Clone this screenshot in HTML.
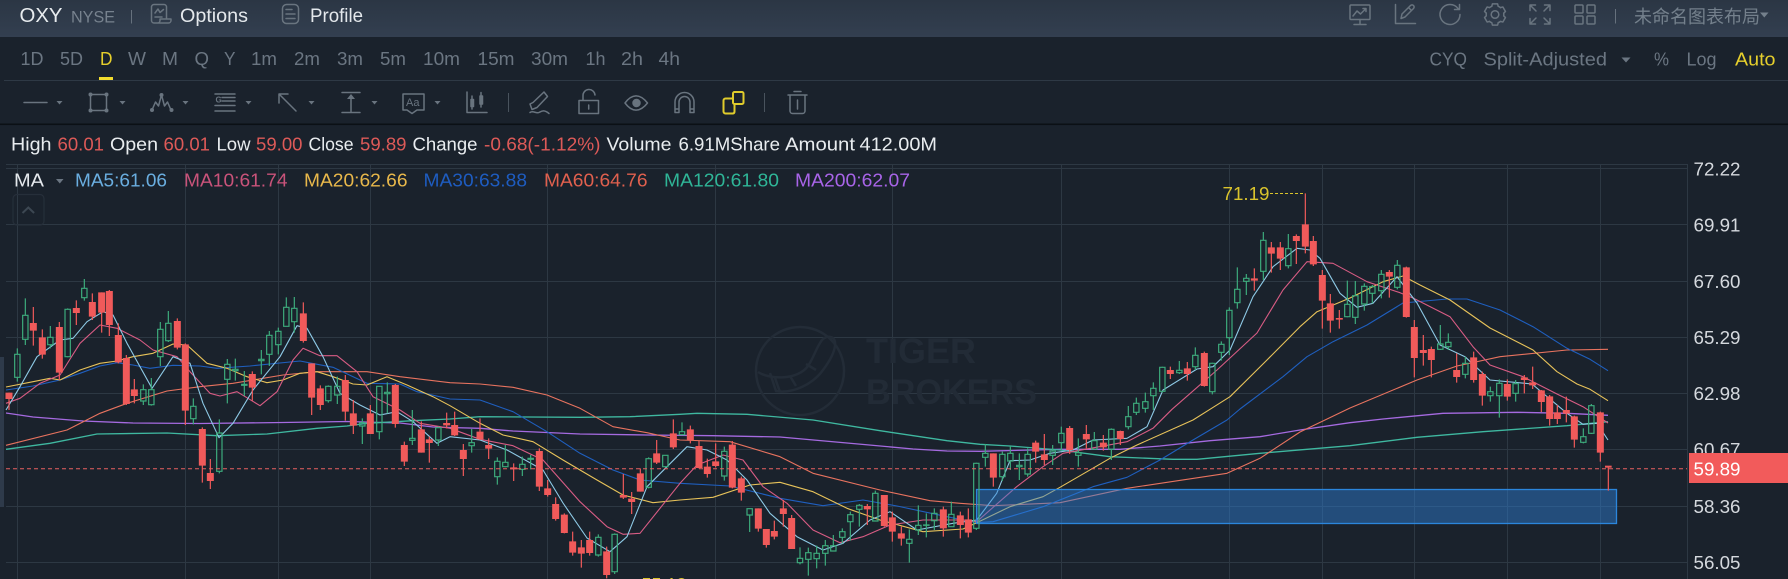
<!DOCTYPE html>
<html><head><meta charset="utf-8"><title>OXY</title>
<style>
html,body{margin:0;padding:0;background:#1a222c;width:1788px;height:579px;overflow:hidden}
svg{display:block}
text{font-family:"Liberation Sans","Noto Sans CJK SC",sans-serif}
.ic{fill:none;stroke:#69747f;stroke-width:1.5;stroke-linecap:round;stroke-linejoin:round}
.it{fill:none;stroke:#5d6874;stroke-width:1.5;stroke-linecap:round;stroke-linejoin:round}
.c path{vector-effect:non-scaling-stroke;fill:none}
.rw{stroke:#f05a5a;stroke-width:1.2}
.rb{stroke:#f05a5a;stroke-width:7}
.gn{stroke:#3dab7c;stroke-width:1.2}
.ma{fill:none;stroke-width:1.1;stroke-linejoin:round}
</style></head><body>
<svg width="1788" height="579" viewBox="0 0 1788 579" xmlns="http://www.w3.org/2000/svg">
<defs><linearGradient id="hd" x1="0" y1="0" x2="0" y2="1"><stop offset="0" stop-color="#2b3644"/><stop offset="1" stop-color="#333f50"/></linearGradient></defs>
<rect width="1788" height="579" fill="#1a222c"/>
<rect width="1788" height="37" fill="url(#hd)"/>
<rect y="80" x="4" width="1784" height="1" fill="#2e3945"/>
<rect y="123.5" width="1788" height="1.6" fill="#0b1015"/>

<!-- Header -->
<text x="19.5" y="22" font-size="20.5" fill="#e8ecef" textLength="43" lengthAdjust="spacingAndGlyphs">OXY</text>
<text x="71" y="22.5" font-size="17" fill="#77828e" textLength="44" lengthAdjust="spacingAndGlyphs">NYSE</text>
<rect x="131" y="10" width="1" height="13.5" fill="#66717d"/>
<g class="ic"><path d="M166.5 19V7a2.5 2.5 0 0 0-2.5-2.5H154a2.5 2.5 0 0 0-2.5 2.5v13.5a2.5 2.5 0 0 0 2.5 2.5h14.5a2.5 2.5 0 0 0 2.5-2.5V19H160v1.5a2.5 2.5 0 0 1-2.5 2.5"/><path d="M155 13l3-4 2 3.5 3.5-3"/><path d="M155 17h7"/></g>
<text x="180" y="22" font-size="19" fill="#e4e8ec" textLength="68" lengthAdjust="spacingAndGlyphs">Options</text>
<g class="ic"><rect x="282.5" y="4.5" width="16" height="19" rx="4"/><path d="M286 9.5h6M286 14h9M286 18.5h9"/></g>
<text x="310" y="22" font-size="19" fill="#e4e8ec" textLength="53" lengthAdjust="spacingAndGlyphs">Profile</text>

<g class="ic">
<rect x="1350" y="5" width="20" height="14.5" rx="1"/><path d="M1360 19.5V24M1354 24.5h12M1353 16l4-5 3.5 3 5-5M1363 8.5h3v3"/>
<path d="M1395.5 4.5V23.5H1415.5M1401 18.5l1-4.5 8.5-8.5a1.8 1.8 0 0 1 3 3l-8.5 8.5zM1408.5 7.5l3 3"/>
<path d="M1458 8.5A10 10 0 1 0 1460 14.5M1459.5 4.5v5h-5" />
<g transform="translate(1495 14.5)"><circle r="3.8"/>
<path id="gs" d="M-3.2-8.2L-2.6-10.6H2.6L3.2-8.2A9 9 0 0 1 5.5-6.87"/>
<path transform="rotate(60)" d="M-3.2-8.2L-2.6-10.6H2.6L3.2-8.2A9 9 0 0 1 5.5-6.87"/>
<path transform="rotate(120)" d="M-3.2-8.2L-2.6-10.6H2.6L3.2-8.2A9 9 0 0 1 5.5-6.87"/>
<path transform="rotate(180)" d="M-3.2-8.2L-2.6-10.6H2.6L3.2-8.2A9 9 0 0 1 5.5-6.87"/>
<path transform="rotate(240)" d="M-3.2-8.2L-2.6-10.6H2.6L3.2-8.2A9 9 0 0 1 5.5-6.87"/>
<path transform="rotate(300)" d="M-3.2-8.2L-2.6-10.6H2.6L3.2-8.2A9 9 0 0 1 5.5-6.87"/></g>
<path d="M1530 5h5.5M1530 5v5.5M1530 5l6 6M1550 5h-5.5M1550 5v5.5M1550 5l-6 6M1530 24v-5.5M1530 24h5.5M1530 24l6-6M1550 24v-5.5M1550 24h-5.5M1550 24l-6-6"/>
<rect x="1575" y="5" width="8" height="8" rx="1"/><rect x="1587" y="5" width="8" height="8" rx="1"/><rect x="1575" y="16" width="8" height="8" rx="1"/><rect x="1587" y="16" width="8" height="8" rx="1"/>
</g>
<rect x="1615" y="9" width="1" height="14.5" fill="#66717d"/>
<text x="1634" y="23" font-size="18" fill="#74808c" textLength="126">未命名图表布局</text>
<path d="M1760 12.5h8.5l-4.2 5z" fill="#74808c"/>

<!-- Timeframes -->
<g font-size="18" fill="#6b7682">
<text x="20.5" y="65" textLength="23" lengthAdjust="spacingAndGlyphs">1D</text>
<text x="60" y="65" textLength="23" lengthAdjust="spacingAndGlyphs">5D</text>
<text x="100" y="65" textLength="12.5" lengthAdjust="spacingAndGlyphs" fill="#e6cf2c">D</text>
<text x="128" y="65" textLength="18" lengthAdjust="spacingAndGlyphs">W</text>
<text x="162" y="65" textLength="16" lengthAdjust="spacingAndGlyphs">M</text>
<text x="194.5" y="65" textLength="14.5" lengthAdjust="spacingAndGlyphs">Q</text>
<text x="224" y="65" textLength="11.5" lengthAdjust="spacingAndGlyphs">Y</text>
<text x="251" y="65" textLength="26" lengthAdjust="spacingAndGlyphs">1m</text>
<text x="294" y="65" textLength="26" lengthAdjust="spacingAndGlyphs">2m</text>
<text x="337" y="65" textLength="26" lengthAdjust="spacingAndGlyphs">3m</text>
<text x="380" y="65" textLength="26" lengthAdjust="spacingAndGlyphs">5m</text>
<text x="423" y="65" textLength="37" lengthAdjust="spacingAndGlyphs">10m</text>
<text x="477.5" y="65" textLength="37" lengthAdjust="spacingAndGlyphs">15m</text>
<text x="531" y="65" textLength="37" lengthAdjust="spacingAndGlyphs">30m</text>
<text x="585.5" y="65" textLength="20" lengthAdjust="spacingAndGlyphs">1h</text>
<text x="621" y="65" textLength="22" lengthAdjust="spacingAndGlyphs">2h</text>
<text x="658.5" y="65" textLength="21.5" lengthAdjust="spacingAndGlyphs">4h</text>
<text x="1429.5" y="65.5" textLength="37.5" lengthAdjust="spacingAndGlyphs">CYQ</text>
<text x="1483.5" y="65.5" textLength="123.5" lengthAdjust="spacingAndGlyphs">Split-Adjusted</text>
<text x="1654" y="65.5" textLength="15" lengthAdjust="spacingAndGlyphs">%</text>
<text x="1686.5" y="65.5" textLength="30" lengthAdjust="spacingAndGlyphs">Log</text>
<text x="1735" y="65.5" textLength="40.5" lengthAdjust="spacingAndGlyphs" fill="#e6cf2c">Auto</text>
</g>
<rect x="99" y="77" width="14" height="3" fill="#f2dc2e"/>
<path d="M1621.5 57.5h9l-4.5 5z" fill="#6b7682"/>

<!-- Toolbar -->
<g class="ic">
<path d="M24 102.5h23"/>
<path d="M90.5 94.5h16v16h-16z"/>
<path d="M152 110l3.5-8 3 4 3-11 3 11 3-4 3.5 8"/>
<path d="M215 94h20M222 97.5h13M222 101h13M215 105.5h20M215 111h20"/>
<path d="M279 94l17 17M279 94h9M279 94v9"/>
<path d="M342 92.5h18M342 112.5h18M351 96v16"/>
<path d="M403 94h21v16h-7l-5 3.5-5-3.5h-4z"/>
<path d="M467 92v20.5h20M472 99.5v7M472 96v3M472 106v3M481 96v8M481 92.5v3M481 104v3"/>
<path d="M471 99.5h2.5v7h-2.5zM480 96h2.5v8H480z" fill="#69747f"/>
<path d="M530 104l2 5.5 5-2 10.5-11-3.5-4.5-11 10.5zM530 112.5c3-2.5 6 1.5 9 0s5-3 10 1"/>
<path d="M579 100.5h19.5v13h-19.5zM583 100.5v-4.5a6 6 0 0 1 12-1M588.7 105v4"/>
<path d="M625 103c7-9.5 15-9.5 22.500 0-7.500 9.500-15.500 9.500-22.500 0z"/>
<circle cx="636.500" cy="103" r="3.500" fill="#69747f"/>
<path d="M675 112.500v-10.500a9.500 9.500 0 0 1 19 0v10.500h-4v-10.500a5.500 5.500 0 0 0-11 0v10.500zM675 109h4M690 109h4"/>
<path d="M788 95h19M794 91.500h7M790 95v16a2.500 2.500 0 0 0 2.500 2.500h10a2.500 2.500 0 0 0 2.500-2.500V95M797.500 100v9"/>
</g>
<g fill="#69747f">
<text x="406" y="106" font-size="11">Aa</text>
<text x="215.500" y="102.500" font-size="8" font-weight="bold">G</text>
<circle cx="90.500" cy="94.500" r="2"/><circle cx="106.500" cy="94.500" r="2"/><circle cx="90.500" cy="110.500" r="2"/><circle cx="106.500" cy="110.500" r="2"/>
<circle cx="152" cy="110" r="2"/><circle cx="171.500" cy="110" r="2"/><circle cx="161.500" cy="95" r="2"/>
<path d="M351 94l-4 5h8zM56.500 101h6l-3 3.500zM119.500 101h6l-3 3.500zM182.500 101h6l-3 3.500zM245.500 101h6l-3 3.500zM308.500 101h6l-3 3.500zM371.500 101h6l-3 3.500zM434.500 101h6l-3 3.500z"/>
<rect x="508" y="93" width="1" height="19" opacity=".6"/><rect x="764" y="93" width="1" height="19" opacity=".6"/>
</g>
<g fill="none" stroke="#e0cc2c" stroke-width="2" stroke-linejoin="round">
<rect x="733" y="92" width="10.500" height="12" rx="1.500"/><path d="M733 98.500h-7.500a2 2 0 0 0-2 2v11a2 2 0 0 0 2 2h7.500a2 2 0 0 0 1.500-2v-7.500"/>
</g>

<!-- Info -->
<g font-size="18" fill="#e8ecef">
<text x="11" y="150.500" textLength="40.500" lengthAdjust="spacingAndGlyphs">High</text>
<text x="57.500" y="150.500" textLength="46.500" lengthAdjust="spacingAndGlyphs" fill="#dd5a58">60.01</text>
<text x="110" y="150.500" textLength="48" lengthAdjust="spacingAndGlyphs">Open</text>
<text x="163.500" y="150.500" textLength="46.500" lengthAdjust="spacingAndGlyphs" fill="#dd5a58">60.01</text>
<text x="216.500" y="150.500" textLength="34" lengthAdjust="spacingAndGlyphs">Low</text>
<text x="256" y="150.500" textLength="46.500" lengthAdjust="spacingAndGlyphs" fill="#dd5a58">59.00</text>
<text x="308.500" y="150.500" textLength="45" lengthAdjust="spacingAndGlyphs">Close</text>
<text x="360" y="150.500" textLength="46.500" lengthAdjust="spacingAndGlyphs" fill="#dd5a58">59.89</text>
<text x="412.500" y="150.500" textLength="65" lengthAdjust="spacingAndGlyphs">Change</text>
<text x="484" y="150.500" textLength="116.500" lengthAdjust="spacingAndGlyphs" fill="#dd5a58">-0.68(-1.12%)</text>
<text x="606.500" y="150.500" textLength="65" lengthAdjust="spacingAndGlyphs">Volume</text>
<text x="678.500" y="150.500" textLength="101.500" lengthAdjust="spacingAndGlyphs">6.91MShare</text>
<text x="785" y="150.500" textLength="70" lengthAdjust="spacingAndGlyphs">Amount</text>
<text x="859.500" y="150.500" textLength="77.500" lengthAdjust="spacingAndGlyphs">412.00M</text>
</g>

<!-- Grid -->
<g stroke="#2d3843" stroke-width="1" fill="none">
<path d="M6 164.500H1687M6 168.500H1687M6 224.500H1687M6 281.500H1687M6 337.500H1687M6 393.500H1687M6 449.500H1687M6 506.500H1687M6 562.500H1687"/>
<path d="M17.500 164V579M185.500 164V579M278.500 164V579M370.500 164V579M547.500 164V579M715.500 164V579M892.500 164V579M1061.500 164V579M1229.500 164V579M1322.500 164V579M1414.500 164V579M1507.500 164V579M1600.500 164V579M1687.500 164V579"/>
</g>
<rect x="0" y="357" width="4" height="150" fill="#2e3a4a"/>

<!-- Watermark -->
<g fill="none" stroke="#232c37" stroke-width="2.500">
<circle cx="800" cy="371" r="44"/>
<path d="M758 372c12 8 40 8 50-6 6-9 8-18 14-26 5-5 12-4 13 2 1 9-6 20-12 28-10 14-30 24-47 21l-6-18"/>
<path d="M775 378l5 14M790 376l6 10M806 364l10 6" />
</g>
<g fill="#222b36" font-weight="bold">
<text x="866" y="363" font-size="35" textLength="110" lengthAdjust="spacingAndGlyphs">TIGER</text>
<text x="866" y="404" font-size="35" textLength="171" lengthAdjust="spacingAndGlyphs">BROKERS</text>
</g>

<!-- MA lines -->
<g class="ma">
<polyline stroke="#a56ae0" stroke-width="1.300" points="6,413 33,417 83,421 133,423 200,423.500 283,422.500 347,421.500 400,423 433,427 450,427.500 480,428.300 513,431 580,434 647,435 713,435.700 780,437 847,443 913,449 947,451 980,451.300 1060,449.300 1120,449.300 1160,446 1210,440.700 1260,436.700 1300,430 1350,422.700 1383,419 1443,413.300 1517,412.300 1567,413.300 1608,415.300"/>
<polyline stroke="#3fb8a0" stroke-width="1.300" points="6,449.300 50,443.300 97,434 167,433 217,435.700 267,434 317,428.300 347,426 367,423.300 413,420.700 450,419 480,416.700 580,417.300 630,416.700 680,414.300 697,413.300 747,414.300 813,420 880,430.700 947,440.700 980,444.300 1010,446 1060,450 1110,456.700 1173,459.300 1197,459.300 1260,453.300 1350,445.700 1417,437.300 1483,431.700 1567,425.700 1608,421.700"/>
<polyline stroke="#e8735f" points="6,445.300 67,430 100,413.300 127,403.300 167,391 200,386.700 233,383.300 283,375 317,371.700 367,371.700 400,376.700 450,382.700 480,384 513,387.300 547,395 580,408.300 613,426.700 647,432.700 680,440 730,441.700 780,456.700 813,473.300 880,490 930,500.700 960,503.300 993,505.700 1060,502.700 1127,488.300 1227,473.300 1260,458.300 1300,432 1350,408 1417,380 1457,366 1500,356.700 1567,350 1608,349.300"/>
<polyline stroke="#1f5fbf" points="6,390 33,386 60,380 80,373.300 100,366 117,362.700 133,365 150,368.300 173,365.300 200,366 217,368.300 250,366 300,361 333,367.300 367,383.300 400,384 417,391.700 450,399 480,400 513,411.700 547,431.700 580,453.300 613,470 640,480 680,483.300 730,486 780,498.300 823,505.700 863,500 897,506 947,516.700 976.700,522.700 993,521.700 1043,506.700 1093,486.700 1127,477.300 1160,460 1193,440 1227,420 1240,409 1283,376.700 1307,356.700 1333,341.700 1367,325 1403,303 1447,299 1467,299 1500,310 1533,326.700 1567,348.300 1590,359.300 1608,370.700"/>
<polyline stroke="#e8c35a" points="6,387 33,381.700 50,378.300 60,380 80,370 100,363.300 117,361 133,356.700 153,353.300 173,344 187,345 207,363.300 227,368.300 247,376.700 267,382.700 283,380 300,373.300 317,371.700 333,376.700 353,384 367,385 387,376.700 407,385 433,396.700 450,405.700 480,423.300 503,435 533,441.700 563,460 597,480 623,495 653,502.700 680,500 713,497.300 750,485 780,482.300 813,491.700 847,508.300 880,520 923,531.700 963,529 976.700,522.700 1010,506.700 1043,496.700 1060,487.300 1110,458.300 1137,445 1193,420 1210,409.300 1230,396.700 1267,360 1300,326.700 1317,311.700 1350,298 1383,281.700 1403,276 1420,285 1450,300 1490,328 1533,350 1557,371.700 1577,384 1590,389.300 1608,400.700"/>
<polyline stroke="#d85c84" points="6,403.300 20,398.300 40,383.300 60,375 80,343.300 100,325 117,328.300 140,340 153,350 177,356.700 190,371.700 210,393.300 220,396 237,391.700 260,405.700 277,391.700 293,360 303,348.300 320,355.700 337,355.700 357,371.700 373,396.700 400,410 420,423.300 450,428.300 480,439.300 513,445.700 543,460 580,501.700 607,526.700 623,534.300 640,533.300 680,483.300 697,465 723,455 743,460 763,486.700 787,503.300 813,530 840,542.700 863,536.700 890,525 923,520 963,520 976.700,521.700 1016.700,486.700 1043,466.700 1063,453.300 1127,441.700 1153,428.300 1172,409.300 1217,370 1257,333 1283,290 1307,261.700 1333,263.300 1367,281.700 1400,292.700 1413,298 1450,316.700 1473,346.700 1490,365 1523,376.700 1557,394 1583,406.700 1608,423"/>
<polyline stroke="#8ecae6" points="6,410 20,386.700 37,356.700 60,340 73,338.300 87,321.700 103,311.700 113,315 127,343.300 152,388.300 173,356.700 190,363.300 203,403.300 219,437.700 233,423.300 253,390 280,356.700 297,325.700 307,328.300 323,356.700 340,393.300 360,405 380,415 397,411.700 413,421.700 437,443.300 450,436.700 480,440 507,450 543,470 563,503 587,538 610,551.700 627,536.700 647,486.700 667,466.700 687,446.700 707,450 727,460 747,480 770,513.300 797,536.700 823,550 843,543.300 870,520 890,511.700 917,530 953,523.300 976.700,520 996.700,493.300 1010,460.700 1030,460 1050,453.300 1073,450 1093,440 1127,438.300 1147,426.700 1163,390 1197,369 1213,366.700 1230,350 1253,296.700 1273,266.700 1297,248.300 1310,250 1320,258.300 1340,293.300 1357,307.300 1373,303.300 1397,276.700 1417,303 1440,345 1465,356.700 1490,380 1532,384 1567,413.300 1583,424.300 1597,423.300 1608,440"/>
</g>

<!-- Selection box -->
<rect x="976.500" y="489.500" width="640" height="34" fill="#2e83dc" fill-opacity=".45" stroke="#2b86dc" stroke-width="1.300"/>

<!-- Candles -->
<g class="c">
<g transform="matrix(.33333 0 0 .33333 0 260)">
<path class="rw" d="M27 398V450M100 141V257M127 208V296M178 186V360M229 121V195M277 100V180M305 97V218M328 90V228M355 190V310M379 285V435M403 357V430M532 175V268M556 250V495M607 502V668M631 597V687M757 334V422M910 127V248M935 310V465M961 376V450M1036 345V482M1060 420V522M1111 435V522M1186 372V503M1213 545V618M1264 484V578M1288 530V608M1340 458V505"/>
<path class="rb" d="M27 398V417M100 189V212M127 232V284M178 201V338M229 144V159M277 126V170M305 97V158M328 93V195M355 225V307M379 294V432M403 388V408M532 183V263M556 253V452M607 507V617M631 639V663M757 342V383M910 160V243M935 310V413M961 385V435M1036 360V455M1060 460V497M1111 460V522M1186 375V492M1213 555V605M1264 508V578M1288 538V549M1340 489V496"/>
<path class="gn" d="M52 265V283M52 352V365M44 283H60V352H44ZM76 115V166M76 238V255M68 166H84V238H68ZM151 198V232M151 254V265M143 232H159V254H143ZM203 145V148M203 290V292M195 148H211V290H195ZM253 57V85M253 113V122M245 85H261V113H245ZM430 373V389M430 423V435M422 389H438V423H422ZM454 354V389M454 434V437M446 389H462V434H446ZM481 186V208M481 290V318M473 208H489V290H473ZM505 153V190M505 242V246M497 190H513V242H497ZM580 415V439M580 476V493M572 439H588V476H572ZM658 478V519M658 634V640M650 519H666V634H650ZM682 297V313M682 358V430M674 313H690V358H674ZM706 296V328M706 332V362M698 328H714V332H698ZM733 333V373M733 376V408M725 373H741V376H725ZM784 270V298M784 302V343M776 298H792V302H776ZM808 213V226M808 283V318M800 226H816V283H800ZM835 203V214M835 254V283M827 214H843V254H827ZM859 112V142M859 199V200M851 142H867V199H851ZM883 111V145M883 185V218M875 145H891V185H875ZM985 376V379M985 422V428M977 379H993V422H977ZM1012 350V379M1012 405V432M1004 379H1020V405H1004ZM1087 475V488M1087 498V552M1079 488H1095V498H1079ZM1138 378V379M1138 515V538M1130 379H1146V515H1130ZM1162 367V397M1162 401V460M1154 397H1170V401H1154ZM1237 450V535M1237 541V555M1229 535H1245V541H1229ZM1315 500V503M1315 540V558M1307 503H1323V540H1307Z"/>
</g>
<g transform="matrix(.33333 0 0 .33333 480 380)">
<path class="rw" d="M-76 95V168M-50 192V288M0 115V180M26 175V237M101 250V303M178 205V333M203 300V350M227 352V422M253 400V460M278 455V527M304 480V563M329 455V527M380 500V595M430 282V357M455 336V402M481 265V335M530 180V252M580 118V207M631 137V190M657 183V265M682 236V293M707 190V262M757 183V325M784 290V362M835 385V455M859 447V503M883 422V478M910 360V440M935 405V507M1162 372V435M1213 345V440M1237 395V485M1264 440V497M1390 380V470M1441 395V475M1465 385V472"/>
<path class="rb" d="M-76 135V166M-50 210V237M0 155V178M26 195V206M101 262V268M178 213V320M203 325V345M227 372V417M253 404V459M278 484V518M304 502V521M329 480V519M380 514V585M430 345V353M455 356V366M481 280V335M530 220V248M580 160V202M631 148V180M657 198V264M682 260V282M707 244V258M757 194V323M784 295V338M835 385V446M859 447V495M883 453V470M910 385V402M935 414V507M1162 378V388M1213 345V438M1237 412V455M1264 460V476M1390 388V445M1441 406V435M1465 418V458"/>
<path class="gn" d="M-25 147V188M-25 197V218M-33 188H-17V197H-33ZM52 232V244M52 290V314M44 244H60V290H44ZM76 195V247M76 260V262M68 247H84V260H68ZM127 230V253M127 268V288M119 253H135V268H119ZM152 225V235M152 238V268M144 235H160V238H144ZM355 463V472M355 525V530M347 472H363V525H347ZM404 460V463M404 575V582M396 463H412V575H396ZM506 232V236M506 322V325M498 236H514V322H498ZM556 225V226M556 260V262M548 226H564V260H548ZM606 127V155M606 164V165M598 155H614V164H598ZM733 200V214M733 288V302M725 214H741V288H725ZM809 385V386M809 405V456M801 386H817V405H801ZM960 502V535M960 548V553M952 535H968V548H952ZM985 503V518M985 538V587M977 518H993V538H977ZM1010 497V520M1010 536V565M1002 520H1018V536H1002ZM1036 480V497M1036 520V557M1028 497H1044V520H1028ZM1060 465V497M1060 513V515M1052 497H1068V513H1052ZM1087 445V455M1087 472V490M1079 455H1095V472H1079ZM1111 395V404M1111 425V482M1103 404H1119V425H1103ZM1138 372V376M1138 388V440M1130 376H1146V388H1130ZM1186 332V340M1186 423V425M1178 340H1194V423H1178ZM1288 448V478M1288 490V548M1280 478H1296V490H1280ZM1315 376V436M1315 450V465M1307 436H1323V450H1307ZM1339 400V435M1339 436V472M1331 435H1347V436H1331ZM1363 385V400M1363 422V450M1355 400H1371V422H1355ZM1414 365V403M1406 403H1422V440H1406Z"/>
</g>
<g transform="matrix(.33333 0 0 .33333 960 370)">
<path class="rw" d="M100 250V350M227 212V278M253 192V285M329 168V252M379 165V235M430 195V242M481 182V225"/>
<path class="rb" d="M100 250V323M227 218V245M253 253V270M329 174V240M379 192V208M430 218V232M481 183V207"/>
<path class="gn" d="M49 278V280M49 475V480M41 280H57V475H41ZM76 222V250M76 262V290M68 250H84V262H68ZM127 245V253M127 320V333M119 253H135V320H119ZM151 228V250M151 273V300M143 250H159V273H143ZM178 250V286M178 290V330M170 286H186V290H170ZM203 235V253M203 312V320M195 253H211V312H195ZM278 225V243M278 256V285M270 243H286V256H270ZM304 170V190M304 218V240M296 190H312V218H296ZM355 205V248M355 256V290M347 248H363V256H347ZM403 186V212M403 238V240M395 212H411V238H395ZM454 175V178M454 238V270M446 178H462V238H446ZM505 108V140M505 170V178M497 140H513V170H497ZM529 83V100M529 127V135M521 100H537V127H521ZM556 68V95M556 115V128M548 95H564V115H548Z"/>
</g>
<g transform="matrix(.33333 0 0 .33333 1000 170)">
<path class="rw" d="M511 590V627M562 576V632M613 545V650M763 295V362M814 216V308M841 216V300M889 193V282M916 70V250M940 198V288M967 300V476M991 372V488M1018 420V476M1168 300V383M1219 290V443M1243 450V622M1270 495V587M1294 530V622"/>
<path class="rb" d="M511 600V612M562 595V612M613 549V648M763 325V332M814 232V251M841 232V266M889 198V213M916 163V230M940 213V283M967 315V392M991 400V452M1018 444V449M1168 306V320M1219 292V441M1243 471V564M1270 540V549M1294 537V570"/>
<path class="gn" d="M460 637V655M460 677V720M452 655H468V677H452ZM487 590V592M487 664V668M479 592H495V664H479ZM538 573V601M538 608V612M530 601H546V608H530ZM586 532V556M586 590V600M578 556H594V590H578ZM637 578V580M637 665V673M629 580H645V665H629ZM664 514V523M664 547V572M656 523H672V547H656ZM688 412V421M688 503V555M680 421H696V503H680ZM712 292V358M712 398V416M704 358H720V398H704ZM739 312V325M739 334V375M731 325H747V334H731ZM790 186V211M790 304V330M782 211H798V304H782ZM865 192V236M865 287V295M857 236H873V287H857ZM1042 332V403M1042 440V442M1034 403H1050V440H1034ZM1066 333V377M1066 442V462M1058 377H1074V442H1058ZM1093 340V349M1093 402V422M1085 349H1101V402H1085ZM1117 345V350M1117 370V400M1109 350H1125V370H1109ZM1144 300V313M1144 362V385M1136 313H1152V362H1136ZM1192 270V286M1192 352V358M1184 286H1200V352H1184ZM1321 465V522M1321 538V540M1313 522H1329V538H1313ZM1345 490V517M1345 530V540M1337 517H1353V530H1337Z"/>
</g>
<g transform="matrix(.33333 0 0 .33333 1350 240)">
<path class="rw" d="M320 340V428M371 335V428M397 395V497M472 418V482M523 405V460M548 380V447M574 450V516M599 465V557M622 495V552M649 470V547M673 527V623M751 515V665M775 680V752"/>
<path class="rb" d="M320 390V411M371 352V420M397 402V467M472 432V470M523 412V420M548 427V436M574 451V486M599 469V537M622 517V537M649 510V521M673 529V599M751 517V638"/>
<path class="rb" style="stroke-width:2" d="M765 680H785"/>
<path class="gn" d="M346 350V370M346 403V415M338 370H354V403H338ZM421 440V455M421 467V485M413 455H429V467H413ZM448 418V430M448 467V533M440 430H456V467H440ZM497 420V431M497 460V485M489 431H505V460H489ZM700 565V590M700 607V610M692 590H708V607H692ZM724 492V497M724 580V582M716 497H732V580H716Z"/>
</g>
</g>

<!-- Last price line -->
<path d="M6 468.700H1687" stroke="#e86060" stroke-width="1" stroke-dasharray="4 3" fill="none"/>

<!-- High / low labels -->
<path d="M1270 193.500H1305" stroke="#d9c32c" stroke-width="1" stroke-dasharray="3 2" fill="none"/>
<text x="1222.500" y="200" font-size="18" fill="#d9c32c" textLength="47" lengthAdjust="spacingAndGlyphs">71.19</text>
<text x="641.500" y="591" font-size="18" fill="#d9c32c" textLength="45" lengthAdjust="spacingAndGlyphs">55.13</text>

<!-- MA legend -->
<g font-size="18">
<text x="14" y="186.500" fill="#e4e8ec" textLength="30" lengthAdjust="spacingAndGlyphs">MA</text>
<text x="75" y="186.500" fill="#6aaee0" textLength="92" lengthAdjust="spacingAndGlyphs">MA5:61.06</text>
<text x="184" y="186.500" fill="#c9537a" textLength="103.500" lengthAdjust="spacingAndGlyphs">MA10:61.74</text>
<text x="304" y="186.500" fill="#e8b84b" textLength="103.500" lengthAdjust="spacingAndGlyphs">MA20:62.66</text>
<text x="423.500" y="186.500" fill="#1e5cc0" textLength="103.500" lengthAdjust="spacingAndGlyphs">MA30:63.88</text>
<text x="544" y="186.500" fill="#e0604e" textLength="103.500" lengthAdjust="spacingAndGlyphs">MA60:64.76</text>
<text x="664" y="186.500" fill="#2fb597" textLength="115" lengthAdjust="spacingAndGlyphs">MA120:61.80</text>
<text x="795" y="186.500" fill="#a864e8" textLength="115" lengthAdjust="spacingAndGlyphs">MA200:62.07</text>
</g>
<path d="M56 179h7.500l-3.700 4.500z" fill="#6b7682"/>
<rect x="13" y="194.500" width="31" height="30.500" rx="4" fill="none" stroke="#262f3a" stroke-width="1.200"/>
<path d="M22.500 213l5.800-5.500 5.800 5.500" fill="none" stroke="#3c4752" stroke-width="2"/>

<!-- Price axis -->
<g font-size="18.500" fill="#d5d9de">
<text x="1693.500" y="175.500" textLength="47" lengthAdjust="spacingAndGlyphs">72.22</text>
<text x="1693.500" y="231.500" textLength="47" lengthAdjust="spacingAndGlyphs">69.91</text>
<text x="1693.500" y="288" textLength="47" lengthAdjust="spacingAndGlyphs">67.60</text>
<text x="1693.500" y="344" textLength="47" lengthAdjust="spacingAndGlyphs">65.29</text>
<text x="1693.500" y="400" textLength="47" lengthAdjust="spacingAndGlyphs">62.98</text>
<text x="1693.500" y="456" textLength="47" lengthAdjust="spacingAndGlyphs">60.67</text>
<text x="1693.500" y="513" textLength="47" lengthAdjust="spacingAndGlyphs">58.36</text>
<text x="1693.500" y="569" textLength="47" lengthAdjust="spacingAndGlyphs">56.05</text>
</g>
<rect x="1689" y="453" width="99" height="30" fill="#f25b5b"/>
<text x="1693.500" y="475.500" font-size="18.500" fill="#fff" textLength="47" lengthAdjust="spacingAndGlyphs">59.89</text>
</svg>
</body></html>
